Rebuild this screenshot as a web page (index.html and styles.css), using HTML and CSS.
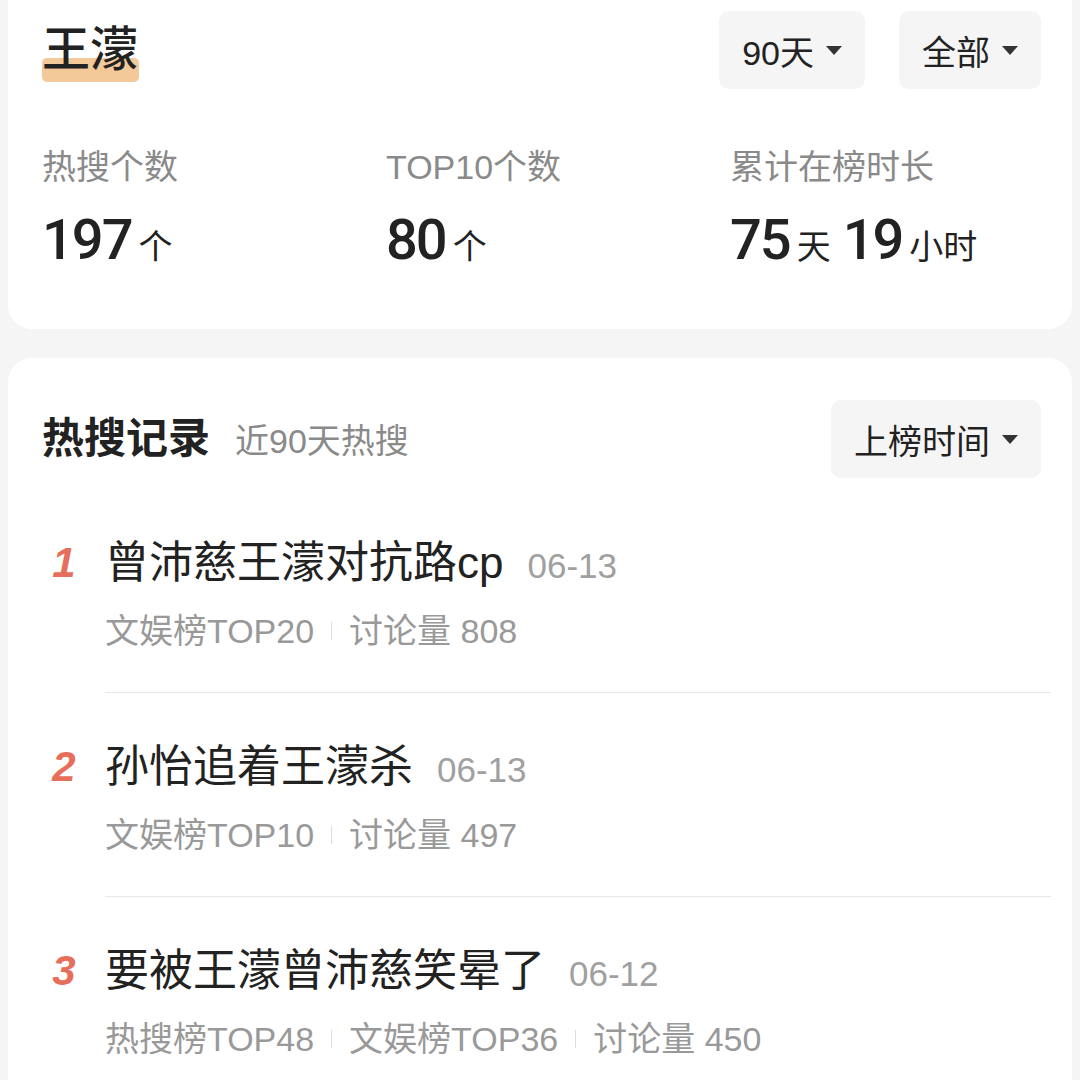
FILE: index.html
```html
<!DOCTYPE html>
<html lang="zh-CN">
<head>
  <meta charset="UTF-8">
  <title>王濛 热搜记录</title>
  <link rel="stylesheet" href="styles.css">
</head>
<body>

  <div class="top-card">
    <div class="head">
      <h1 class="name">王濛</h1>
      <div class="filters">
        <div class="select">90天<i class="caret"></i></div>
        <div class="select">全部<i class="caret"></i></div>
      </div>
    </div>

    <div class="stats">
      <div class="stat">
        <div class="stat-label">热搜个数</div>
        <div class="stat-value"><b>197</b><span>个</span></div>
      </div>
      <div class="stat">
        <div class="stat-label">TOP10个数</div>
        <div class="stat-value"><b>80</b><span>个</span></div>
      </div>
      <div class="stat">
        <div class="stat-label">累计在榜时长</div>
        <div class="stat-value"><b>75</b><span>天</span><b class="num-gap">19</b><span>小时</span></div>
      </div>
    </div>
  </div>

  <div class="card records">
    <div class="records-head">
      <div class="records-title">
        <h2>热搜记录</h2>
        <span>近90天热搜</span>
      </div>
      <div class="select">上榜时间<i class="caret"></i></div>
    </div>

    <ul class="record-list">
      <li class="record">
        <div class="rank">1</div>
        <div class="record-body">
          <div class="record-title">曾沛慈王濛对抗路cp<span class="date">06-13</span></div>
          <div class="meta">文娱榜TOP20<i class="bar"></i>讨论量 808</div>
        </div>
      </li>
      <li class="record">
        <div class="rank">2</div>
        <div class="record-body">
          <div class="record-title">孙怡追着王濛杀<span class="date">06-13</span></div>
          <div class="meta">文娱榜TOP10<i class="bar"></i>讨论量 497</div>
        </div>
      </li>
      <li class="record">
        <div class="rank">3</div>
        <div class="record-body">
          <div class="record-title">要被王濛曾沛慈笑晕了<span class="date">06-12</span></div>
          <div class="meta">热搜榜TOP48<i class="bar"></i>文娱榜TOP36<i class="bar"></i>讨论量 450</div>
        </div>
      </li>
    </ul>
  </div>

</body>
</html>
```

FILE: styles.css
```css
body {
  margin: 0;
  background: #f5f5f5;
  font-family: "Liberation Sans", "Noto Sans CJK SC", sans-serif;
  color: #222;
}

.top-card {
  margin: 0 8px;
  padding: 11px 31px 50px 34px;
  background: #fff;
  border-radius: 0 0 24px 24px;
}

.head {
  display: flex;
  justify-content: space-between;
  align-items: center;
}

.name {
  position: relative;
  z-index: 0;
  margin: 0;
  font-size: 48px;
  font-weight: 500;
  line-height: 78px;
  color: #222;
}

.name::before {
  content: "";
  position: absolute;
  z-index: -1;
  left: 0;
  right: -1px;
  top: 47px;
  height: 24px;
  background: #f3c999;
  border-radius: 5px;
}

.filters {
  display: flex;
  gap: 34px;
}

.select {
  display: flex;
  align-items: center;
  height: 78px;
  padding: 0 23px;
  background: #f5f5f5;
  border-radius: 10px;
  font-size: 34px;
  color: #222;
}

.caret {
  width: 0;
  height: 0;
  margin-left: 12px;
  border-left: 8px solid transparent;
  border-right: 8px solid transparent;
  border-top: 9px solid #333;
}

.stats {
  display: grid;
  grid-template-columns: 344px 344px 1fr;
  margin-top: 56px;
}

.stat-label {
  font-size: 34px;
  line-height: 44px;
  color: #8a8a8a;
}

.stat-value {
  display: flex;
  align-items: baseline;
  margin-top: 19px;
  line-height: 64px;
}

.stat-value b {
  font-family: Roboto, "Liberation Sans", sans-serif;
  font-size: 56px;
  font-weight: 500;
  letter-spacing: -2px;
  color: #222;
}

.stat-value span {
  margin-left: 7px;
  font-size: 34px;
  color: #222;
}

.stat-value .num-gap {
  margin-left: 12px;
}

.card {
  margin: 29px 8px 0;
  background: #fff;
  border-radius: 24px;
}

.records {
  padding: 42px 31px 0 34px;
}

.records-head {
  display: flex;
  justify-content: space-between;
  align-items: center;
}

.records-title {
  display: flex;
  align-items: baseline;
  line-height: 1;
}

.records-title h2 {
  margin: 0;
  font-size: 42px;
  font-weight: 700;
  color: #222;
}

.records-title span {
  margin-left: 25px;
  font-size: 34px;
  color: #8a8a8a;
}

.record-list {
  list-style: none;
  margin: 11px -10px 0 0;
  padding: 0;
}

.record {
  display: flex;
}

.rank {
  width: 44px;
  margin-right: 19px;
  padding-top: 48px;
  text-align: center;
  font-size: 42px;
  font-weight: 700;
  font-style: italic;
  line-height: 52px;
  color: #e66f5c;
}

.record-body {
  flex: 1;
  padding: 48px 0 41px;
  border-bottom: 1px solid #e8e8e8;
}

.record-title {
  font-size: 44px;
  line-height: 52px;
  color: #222;
}

.date {
  margin-left: 24px;
  font-size: 35px;
  color: #a0a0a0;
}

.meta {
  display: flex;
  align-items: center;
  margin-top: 19px;
  font-size: 34px;
  line-height: 40px;
  color: #999;
}

.bar {
  width: 1px;
  height: 18px;
  margin: 0 17px;
  background: #ddd;
}
```
